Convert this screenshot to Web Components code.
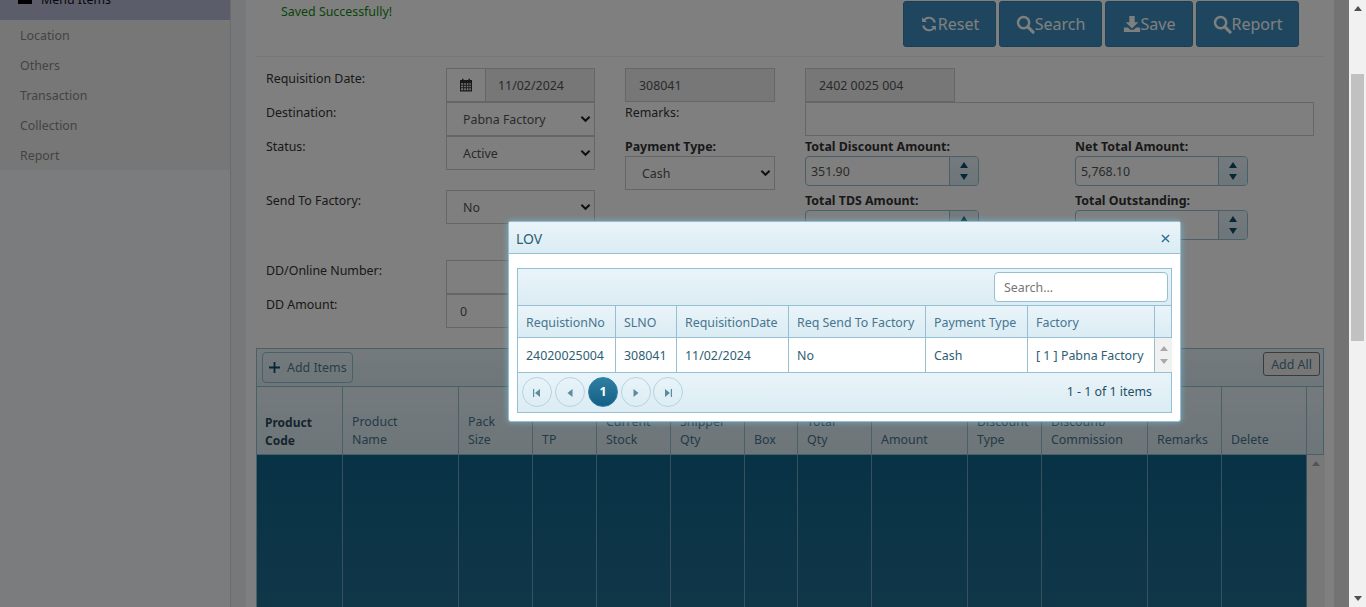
<!DOCTYPE html>
<html>
<head>
<meta charset="utf-8">
<title>Requisition</title>
<style>
    html, body { margin: 0; height: 100%; overflow: hidden; }
    body { font: 12.4px/20px "Noto Sans", "Open Sans", sans-serif; color: #333; background: #fff; }
</style>
</head>
<body>
<app-page></app-page>
<script>
const icons = {
    reset: `<svg viewBox="0 0 20 20" width="18" height="18"><path d="M17.6 8.2h-2.4a5.6 5.6 0 0 0-9.500-2.300l2 2H2.400V2.600l1.800 1.800a7.800 7.800 0 0 1 13.400 3.800zM2.400 11.800h2.400a5.600 5.600 0 0 0 9.500 2.300l-2-2h5.300v5.300l-1.800-1.800a7.800 7.800 0 0 1-13.400-3.800z" fill="currentColor"/></svg>`,
    search: `<svg viewBox="0 0 20 20" width="19" height="19"><circle cx="8" cy="8" r="5.900" fill="none" stroke="currentColor" stroke-width="2.600"/><path d="M12.500 12.500l5.500 5.500" stroke="currentColor" stroke-width="3.200" stroke-linecap="round"/></svg>`,
    save: `<svg viewBox="0 0 20 20" width="18" height="18"><path d="M7 1h6v7h4l-7 7-7-7h4zM1 14h4.500l2.500 2.500h4l2.500-2.500H19v5H1z" fill="currentColor"/></svg>`,
    calendar: `<svg viewBox="0 0 14 14" width="14" height="14"><path d="M1 2h2V.8h1.500V2h5V.8H11V2h2v11.500H1zM2.200 5.300v1.500h2V5.300zm3 0v1.500h1.600V5.300zm2.600 0v1.500h1.600V5.300zm2.600 0v1.500h1.400V5.300zM2.200 7.800v1.500h2V7.800zm3 0v1.500h1.600V7.800zm2.600 0v1.500h1.600V7.800zm2.600 0v1.500h1.400V7.800zM2.200 10.300v1.900h2v-1.900zm3 0v1.900h1.600v-1.900zm2.600 0v1.900h1.600v-1.900zm2.600 0v1.900h1.400v-1.900z" fill="currentColor" fill-rule="evenodd"/></svg>`,
    chevron: `<svg viewBox="0 0 12 8" width="11" height="8"><path d="M1.500 1.500L6 6l4.500-4.500" fill="none" stroke="currentColor" stroke-width="2.200"/></svg>`,
    plus: `<svg viewBox="0 0 12 12" width="11" height="11"><path d="M6 0v12M0 6h12" stroke="currentColor" stroke-width="2"/></svg>`
};

class AppPage extends HTMLElement {
    constructor() {
        super();
        this.attachShadow({mode: "open"}).innerHTML = `
            <style>
                :host { display: grid; grid-template-columns: 1fr 17px; height: 607px; overflow: hidden; }
                .stage { position: relative; display: grid; grid-template-columns: 231px 15px 1088px 15px; height: 607px; overflow: hidden; }
                .gutter { background: #ecf0f5; }
                .gutter.right { background: #e6e6e8; }
                .shade { position: absolute; inset: 0; background: rgba(0, 0, 0, .5); }
            </style>
            <div class="stage">
                <side-menu></side-menu>
                <div class="gutter"></div>
                <requisition-view></requisition-view>
                <div class="gutter right"></div>
                <div class="shade"></div>
                <lov-dialog></lov-dialog>
            </div>
            <page-scrollbar></page-scrollbar>
        `;
    }
}

class SideMenu extends HTMLElement {
    constructor() {
        super();
        const items = ["Location", "Others", "Transaction", "Collection", "Report"];
        this.attachShadow({mode: "open"}).innerHTML = `
            <style>
                :host { display: block; background: #f5f9fd; border-right: 1px solid #d5d7db; box-sizing: border-box; height: 607px; }
                .head { display: flex; align-items: flex-start; gap: 9px; height: 20px; padding-left: 18px; overflow: hidden; background: #b6bcd4; }
                .mark { width: 14px; height: 4px; background: #000; flex: none; }
                .head span { color: #111; line-height: 14px; height: 14px; margin-top: -7px; white-space: nowrap; }
                .list { background: #eeeeee; padding: 0 0 0 20px; height: 150px; }
                .list div { height: 30px; line-height: 32px; color: #888; }
            </style>
            <div class="head"><div class="mark"></div><span>Menu Items</span></div>
            <div class="list">${items.map((i) => `<div>${i}</div>`).join("")}</div>
        `;
    }
}

class RequisitionView extends HTMLElement {
    constructor() {
        super();
        this.attachShadow({mode: "open"}).innerHTML = `
            <style>
                :host { display: block; background: #fff; height: 607px; overflow: hidden; padding: 0 10px; box-sizing: border-box; }
                .top { display: flex; justify-content: space-between; height: 57px; padding: 1px 25px 0 25px; box-sizing: border-box; border-bottom: 1px solid #f0f0f0; }
                .msg { color: #128a12; line-height: 20px; padding-top: 1px; }
                .btns { display: flex; gap: 3px; height: 46px; }
            </style>
            <div class="top">
                <div class="msg">Saved Successfully!</div>
                <div class="btns">
                    <action-button icon="reset" style="width:93px">Reset</action-button>
                    <action-button icon="search" style="width:103px">Search</action-button>
                    <action-button icon="save" style="width:88px">Save</action-button>
                    <action-button icon="search" style="width:103px">Report</action-button>
                </div>
            </div>
            <requisition-form></requisition-form>
            <item-grid></item-grid>
        `;
    }
}

class ActionButton extends HTMLElement {
    constructor() {
        super();
        this.attachShadow({mode: "open"}).innerHTML = `
            <style>
                :host { display: flex; align-items: center; justify-content: center; box-sizing: border-box; height: 46px; background: #3c8dbc; border: 1px solid #367fa9; border-radius: 3px; color: #fff; font-size: 16px; }
                svg { display: block; }
            </style>
            ${icons[this.getAttribute("icon")]}<slot></slot>
        `;
    }
}

class FormBox extends HTMLElement {
    constructor() {
        super();
        const chevron = this.hasAttribute("select") ? icons.chevron : "";
        this.attachShadow({mode: "open"}).innerHTML = `
            <style>
                :host { display: flex; align-items: center; justify-content: space-between; box-sizing: border-box; height: 34px; border: 1px solid #ccc; padding: 0 3px 0 var(--pad, 13px); background: #fff; color: #555; white-space: nowrap; }
                :host([readonly]) { background: #eee; }
                span { padding-top: 2px; }
                svg { color: #222; display: block; }
            </style>
            <span><slot></slot></span>${chevron}
        `;
    }
}

class DateBox extends HTMLElement {
    constructor() {
        super();
        this.attachShadow({mode: "open"}).innerHTML = `
            <style>
                :host { display: flex; height: 34px; box-sizing: border-box; border: 1px solid #ccc; color: #555; }
                .addon { display: flex; align-items: center; justify-content: center; width: 38px; flex: none; background: #fff; border-right: 1px solid #ccc; color: #333; }
                .value { display: flex; align-items: center; flex: 1; background: #eee; padding: 2px 0 0 12px; }
            </style>
            <div class="addon">${icons.calendar}</div>
            <div class="value"><slot></slot></div>
        `;
    }
}

class SpinBox extends HTMLElement {
    constructor() {
        super();
        this.attachShadow({mode: "open"}).innerHTML = `
            <style>
                :host { display: flex; box-sizing: border-box; height: 30px; border: 1px solid #94c0d2; border-radius: 4px; color: #555; overflow: hidden; background: #fff; }
                .value { flex: 1; display: flex; align-items: center; padding: 2px 0 0 5px; }
                .arrows { width: 28px; display: flex; flex-direction: column; align-items: center; justify-content: center; gap: 6px; border-left: 1px solid #94c0d2; background: linear-gradient(#e9f4f9, #dbecf4); }
                i { display: block; width: 0; height: 0; border: 4px solid transparent; border-width: 0 4px 6px; border-bottom-color: #0f4f6e; }
                i.down { border-width: 6px 4px 0; border-top-color: #0f4f6e; border-bottom-color: transparent; }
            </style>
            <div class="value"><slot></slot></div>
            <div class="arrows"><i></i><i class="down"></i></div>
        `;
    }
}

class RequisitionForm extends HTMLElement {
    constructor() {
        super();
        this.attachShadow({mode: "open"}).innerHTML = `
            <style>
                :host { display: grid; grid-template-columns: 180px 149px 30px 150px 30px 270px 239px; grid-template-rows: 34px 34px 54px 70px 34px 34px; margin: 11px 0 20px 10px; }
                .lbl { color: #333; line-height: 20px; padding-top: 1px; }
                b { display: block; box-sizing: border-box; height: 20px; line-height: 20px; padding-top: 1px; color: #333; white-space: nowrap; }
                .c1 { grid-column: 1; } .c2 { grid-column: 2; } .c4 { grid-column: 4; }
                .c6 { grid-column: 6; } .c7 { grid-column: 7; }
                .wide { grid-column: 6 / 8; width: 509px; }
                spin-box { width: 174px; } .net spin-box { width: 173px; }
                .box3 { width: 150px; }
            </style>
            <div class="lbl c1">Requisition Date:</div>
            <date-box class="c2">11/02/2024</date-box>
            <form-box class="c4" readonly>308041</form-box>
            <form-box class="c6 box3" readonly>2402 0025 004</form-box>

            <div class="lbl c1">Destination:</div>
            <form-box class="c2" select style="--pad:16px">Pabna Factory</form-box>
            <div class="lbl c4">Remarks:</div>
            <form-box class="wide"></form-box>

            <div class="lbl c1">Status:</div>
            <div class="c2"><form-box select style="--pad:16px">Active</form-box></div>
            <div class="c4"><b>Payment Type:</b><form-box select style="--pad:16px">Cash</form-box></div>
            <div class="c6"><b>Total Discount Amount:</b><spin-box>351.90</spin-box></div>
            <div class="c7 net"><b>Net Total Amount:</b><spin-box>5,768.10</spin-box></div>

            <div class="lbl c1">Send To Factory:</div>
            <div class="c2"><form-box select style="--pad:16px">No</form-box></div>
            <div class="c6"><b>Total TDS Amount:</b><spin-box></spin-box></div>
            <div class="c7 net"><b>Total Outstanding:</b><spin-box></spin-box></div>

            <div class="lbl c1">DD/Online Number:</div>
            <form-box class="c2"></form-box>
            <div class="lbl c1" style="grid-row:6">DD Amount:</div>
            <form-box class="c2" style="grid-row:6">0</form-box>
        `;
    }
}

class ItemGrid extends HTMLElement {
    constructor() {
        super();
        const cols = [
            ["Product<br>Code", 86], ["Product<br>Name", 116], ["Pack<br>Size", 74], ["TP", 64],
            ["Current<br>Stock", 74], ["Shipper<br>Qty", 74], ["Box", 53], ["Total<br>Qty", 74],
            ["Amount", 96], ["Discount<br>Type", 74], ["Discount/<br>Commission", 106],
            ["Remarks", 74], ["Delete", 85]
        ];
        const tracks = cols.map((c) => c[1] + "px").join(" ") + " 18px";
        this.attachShadow({mode: "open"}).innerHTML = `
            <style>
                :host { display: block; box-sizing: border-box; width: 1068px; height: 300px; border: 1px solid #94c0d2; border-bottom: 0; }
                .bar { display: flex; justify-content: space-between; height: 38px; box-sizing: border-box; padding: 3px 3px 0 5px; background: linear-gradient(#e9f4f9, #dbecf4); border-bottom: 1px solid #94c0d2; }
                .add { display: flex; align-items: center; gap: 7px; box-sizing: border-box; width: 91px; height: 31px; padding-left: 6px; border: 1px solid #94c0d2; border-radius: 4px; color: #4d7d93; }
                .add svg { color: #0f4f6e; }
                .all { box-sizing: border-box; width: 57px; height: 24px; line-height: 24px; text-align: center; border: 1px solid #777; border-radius: 3px; color: #4d7d93; background: #eee; }
                .row { display: grid; grid-template-columns: ${tracks}; }
                .th { height: 67px; background: linear-gradient(#e9f4f9, #dbecf4); border-bottom: 1px solid #94c0d2; }
                .th div { display: flex; align-items: flex-end; box-sizing: border-box; padding: 0 0 5px 9px; line-height: 18px; color: #47758f; border-right: 1px solid #94c0d2; }
                .th div:first-child { font-weight: bold; color: #2a4a5c; padding: 0 0 4px 8px; font-size: 12px; }
                .th div:last-child { border-right: 0; }
                .tb { height: 160px; }
                .tb div { border-right: 1px solid #6fa3ba; background: linear-gradient(#10648c, #226f91); }
                .tb .sb { border: 0; background: #f1f1f1; display: flex; justify-content: center; padding-top: 6px; box-sizing: border-box; }
                .tb .sb i { display: block; width: 0; height: 0; border: 4px solid transparent; border-width: 0 4px 5px; border-bottom-color: #a9a9a9; }
            </style>
            <div class="bar">
                <div class="add">${icons.plus}<span>Add Items</span></div>
                <div class="all">Add All</div>
            </div>
            <div class="row th">${cols.map((c) => `<div>${c[0]}</div>`).join("")}<div></div></div>
            <div class="row tb">${cols.map(() => `<div></div>`).join("")}<div class="sb"><i></i></div></div>
        `;
    }
}

class LovDialog extends HTMLElement {
    constructor() {
        super();
        const heads = ["RequistionNo", "SLNO", "RequisitionDate", "Req Send To Factory", "Payment Type", "Factory"];
        const cells = ["24020025004", "308041", "11/02/2024", "No", "Cash", "[ 1 ] Pabna Factory"];
        const tracks = "98px 61px 112px 137px 102px 127px 17px";
        this.attachShadow({mode: "open"}).innerHTML = `
            <style>
                :host { position: absolute; left: 508px; top: 221px; width: 673px; height: 201px; box-sizing: border-box; background: #fff; border: 1px solid #94c0d2; border-radius: 3px; box-shadow: 0 0 6px rgba(120, 195, 225, .7); color: #2e5e73; }
                .title { display: flex; align-items: center; justify-content: space-between; box-sizing: border-box; height: 32px; padding: 2px 10px 0 7px; background: linear-gradient(#e9f4f9, #dbecf4); border-bottom: 1px solid #94c0d2; font-size: 14px; color: #2e5e73; }
                .title span { padding-top: 1px; }
                .title svg { display: block; }
                .grid { margin: 14px 8px 0; border: 1px solid #94c0d2; }
                .tool { display: flex; justify-content: flex-end; box-sizing: border-box; height: 37px; padding: 3px 3px 0 0; background: linear-gradient(#e9f4f9, #dbecf4); border-bottom: 1px solid #94c0d2; }
                .search { box-sizing: border-box; width: 174px; height: 30px; line-height: 30px; padding-left: 9px; background: #fff; border: 1px solid #94c0d2; border-radius: 4px; color: #757575; }
                .row { display: grid; grid-template-columns: ${tracks}; }
                .row > div { display: flex; align-items: center; box-sizing: border-box; padding: 2px 0 0 8px; border-right: 1px solid #94c0d2; white-space: nowrap; overflow: hidden; }
                .row > div:last-child { border-right: 0; padding: 0; }
                .th { height: 31px; background: linear-gradient(#e9f4f9, #dbecf4); border-bottom: 1px solid #94c0d2; color: #47758f; }
                .tr { height: 34px; border-bottom: 1px solid #94c0d2; }
                .tr .sb { flex-direction: column; justify-content: center; gap: 8px; background: #f1f1f1; }
                .sb i { display: block; width: 0; height: 0; border: 4px solid transparent; border-width: 0 4px 5px; border-bottom-color: #a9a9a9; }
                .sb i.down { border-width: 5px 4px 0; border-top-color: #a9a9a9; border-bottom-color: transparent; }
                .pager { display: flex; align-items: center; justify-content: space-between; box-sizing: border-box; height: 39px; padding: 0 19px 1px 4px; background: linear-gradient(#e9f4f9, #dbecf4); color: #1f4f68; }
                .pages { display: flex; gap: 3px; }
                .pages .pg:last-child { margin-left: -1px; }
                .pg { display: flex; align-items: center; justify-content: center; box-sizing: border-box; width: 30px; height: 30px; border: 1px solid #b5d3e0; border-radius: 50%; color: #5a8ba1; }
                .pg.on { background: linear-gradient(#2f7fa3, #145f85); border-color: #2f7fa3; color: #fff; font-weight: bold; }
                .pg svg { display: block; fill: currentColor; margin-top: 2px; }
            </style>
            <div class="title"><span>LOV</span><svg viewBox="0 0 10 10" width="9" height="9"><path d="M1 1l8 8M9 1l-8 8" stroke="#2e6e8c" stroke-width="1.500"/></svg></div>
            <div class="grid">
                <div class="tool"><div class="search">Search...</div></div>
                <div class="row th">${heads.map((h) => `<div>${h}</div>`).join("")}<div></div></div>
                <div class="row tr">${cells.map((c) => `<div>${c}</div>`).join("")}<div class="sb"><i></i><i class="down"></i></div></div>
                <div class="pager">
                    <div class="pages">
                        <div class="pg"><svg viewBox="0 0 8 8" width="8" height="8"><path d="M0 0h1.200v8H0zM7 0v8L2 4z"/></svg></div>
                        <div class="pg"><svg viewBox="0 0 8 8" width="8" height="8"><path d="M6.500 0v8L1.500 4z"/></svg></div>
                        <div class="pg on">1</div>
                        <div class="pg"><svg viewBox="0 0 8 8" width="8" height="8"><path d="M1.500 0v8l5-4z"/></svg></div>
                        <div class="pg"><svg viewBox="0 0 8 8" width="8" height="8"><path d="M8 0H6.800v8H8zM1 0v8l5-4z"/></svg></div>
                    </div>
                    <div>1 - 1 of 1 items</div>
                </div>
            </div>
        `;
    }
}

class PageScrollbar extends HTMLElement {
    constructor() {
        super();
        this.attachShadow({mode: "open"}).innerHTML = `
            <style>
                :host { display: flex; flex-direction: column; align-items: center; justify-content: space-between; background: #f1f1f1; height: 607px; box-sizing: border-box; padding: 6px 0; position: relative; }
                .t { width: 13px; height: 267px; background: #c1c1c1; position: absolute; top: 74px; left: 2px; }
                i { display: block; width: 0; height: 0; border: 4px solid transparent; border-width: 0 4px 5px; border-bottom-color: #505050; }
                i.down { border-width: 5px 4px 0; border-top-color: #505050; border-bottom-color: transparent; }
            </style>
            <i></i><div class="t"></div><i class="down"></i>
        `;
    }
}

customElements.define("app-page", AppPage);
customElements.define("side-menu", SideMenu);
customElements.define("requisition-view", RequisitionView);
customElements.define("action-button", ActionButton);
customElements.define("form-box", FormBox);
customElements.define("date-box", DateBox);
customElements.define("spin-box", SpinBox);
customElements.define("requisition-form", RequisitionForm);
customElements.define("item-grid", ItemGrid);
customElements.define("lov-dialog", LovDialog);
customElements.define("page-scrollbar", PageScrollbar);
</script>
</body>
</html>
